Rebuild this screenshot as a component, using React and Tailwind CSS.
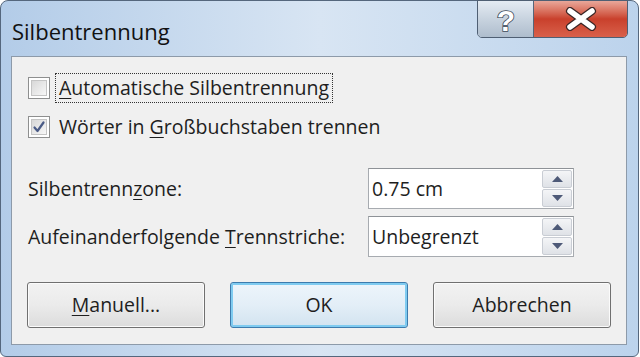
import React from "react";

const font = { fontFamily: '"Open Sans", "Noto Sans", sans-serif' };

function U({ children }) {
  return <span className="underline decoration-1 underline-offset-[3px]">{children}</span>;
}

function CheckBox({ checked }) {
  return (
    <div className="w-[22px] h-[22px] border border-[#8e8f8f] bg-white p-[2px] shrink-0">
      <div className="w-full h-full border border-[#c4c4c4] bg-linear-to-br from-[#d8d8d8] to-[#f7f7f7] flex items-center justify-center">
        {checked && (
          <svg width="14" height="14" viewBox="0 0 14 14">
            <path d="M2.5 7.5 L5.5 11 L11.5 2.5" fill="none" stroke="#4a5b86" strokeWidth="2.2" strokeLinejoin="round" strokeLinecap="round" />
          </svg>
        )}
      </div>
    </div>
  );
}

function Spin() {
  const half = "flex-1 flex items-center justify-center border border-[#c9cdd4] rounded-[2px] bg-linear-to-b from-[#f4f5f7] to-[#dfe2e7]";
  return (
    <div className="w-[30px] h-full flex flex-col gap-[1px] py-[1px]">
      <div className={half}>
        <svg width="11" height="6" viewBox="0 0 11 6"><path d="M0 6 L5.5 0 L11 6 Z" fill="#4e5a78" /></svg>
      </div>
      <div className={half}>
        <svg width="11" height="6" viewBox="0 0 11 6"><path d="M0 0 L5.5 6 L11 0 Z" fill="#4e5a78" /></svg>
      </div>
    </div>
  );
}

function Input({ value }) {
  return (
    <div className="w-[206px] h-[41px] border border-[#a7abb0] border-t-[#8e9297] bg-white flex items-center pl-[3px] pr-[1px]">
      <span className="flex-1 text-[19.5px] text-[#1e1e1e]">{value}</span>
      <Spin />
    </div>
  );
}

function Btn({ children, def }) {
  return (
    <div
      className={
        "w-[178px] h-[46px] rounded-[3px] border flex items-center justify-center text-[19.5px] text-[#1e1e1e] " +
        (def
          ? "border-[#3d7bad] shadow-[inset_0_0_0_2px_#7fcbf0] bg-linear-to-b from-[#edf5fb] via-[#e3eef7] to-[#d2e3f0]"
          : "border-[#707070] shadow-[inset_0_0_0_1px_#fbfbfb] bg-linear-to-b from-[#f2f2f2] via-[#ebebeb] to-[#dcdcdc]")
      }
    >
      {children}
    </div>
  );
}

export default function App() {
  return (
    <div style={font} className="w-[640px] h-[357px] overflow-hidden bg-white">
      <div className="w-[639px] h-[357px] rounded-t-[8px] rounded-b-[6px] border border-[#55677d] bg-linear-to-r from-[#b3cce8] via-[#d8e5f3] to-[#bcd3ec] flex flex-col">
        {/* Title bar */}
        <div className="h-[55px] flex items-start justify-between pl-[11px] pr-[10px] shrink-0">
          <div className="pt-[15px] text-[22px] leading-[30px] text-[#111]">Silbentrennung</div>
          <div className="flex h-[38px] -mt-[1px] border border-[#4f5f73] rounded-b-[5px] overflow-hidden">
            <div className="w-[56px] h-full bg-linear-to-b from-[#e4ebf3] via-[#c8d3df] to-[#aebdcd] flex items-center justify-center border-r border-[#56667a]">
              <svg width="30" height="34" viewBox="0 0 30 34" className="overflow-visible">
                <text x="15" y="29" textAnchor="middle" fontFamily="Liberation Sans, sans-serif" fontWeight="bold" fontSize="30" fill="#fff" stroke="#3d4a5a" strokeWidth="1.6" paintOrder="stroke">?</text>
              </svg>
            </div>
            <div className="w-[93px] h-full bg-linear-to-b from-[#e8a79a] via-[#c9402c] to-[#d9604a] flex items-center justify-center">
              <svg width="32" height="24" viewBox="0 0 32 24">
                <path d="M5 4 L27 20 M27 4 L5 20" stroke="#3a2626" strokeWidth="8" strokeLinecap="round" />
                <path d="M5 4 L27 20 M27 4 L5 20" stroke="#ffffff" strokeWidth="5.5" strokeLinecap="round" />
              </svg>
            </div>
          </div>
        </div>
        {/* Panel */}
        <div className="ml-[10px] mr-[11px] h-[289px] border border-[#8d9aa9] bg-[#f0f0f0] flex flex-col pl-[16px] shrink-0">
          <div className="mt-[16px] h-[30px] flex items-center">
            <CheckBox />
            <div className="ml-[5px] h-[30px] px-[3px] border border-dotted border-[#333] flex items-center text-[19.5px] text-[#1e1e1e]">
              <span><U>A</U>utomatische Silbentrennung</span>
            </div>
          </div>
          <div className="mt-[9px] h-[30px] flex items-center">
            <CheckBox checked />
            <div className="ml-[9px] text-[19.5px] text-[#1e1e1e]">
              Wörter in <U>G</U>roßbuchstaben trennen
            </div>
          </div>
          <div className="mt-[26px] h-[41px] flex items-center">
            <div className="w-[340px] text-[19.5px] text-[#1e1e1e]">Silbentrenn<U>z</U>one:</div>
            <Input value="0.75 cm" />
          </div>
          <div className="mt-[7px] h-[41px] flex items-center">
            <div className="w-[340px] text-[19.5px] text-[#1e1e1e]">Aufeinanderfolgende <U>T</U>rennstriche:</div>
            <Input value="Unbegrenzt" />
          </div>
          <div className="mt-[25px] flex gap-[25px] -ml-[1px]">
            <Btn><span><U>M</U>anuell...</span></Btn>
            <Btn def>OK</Btn>
            <Btn>Abbrechen</Btn>
          </div>
        </div>
      </div>
    </div>
  );
}
